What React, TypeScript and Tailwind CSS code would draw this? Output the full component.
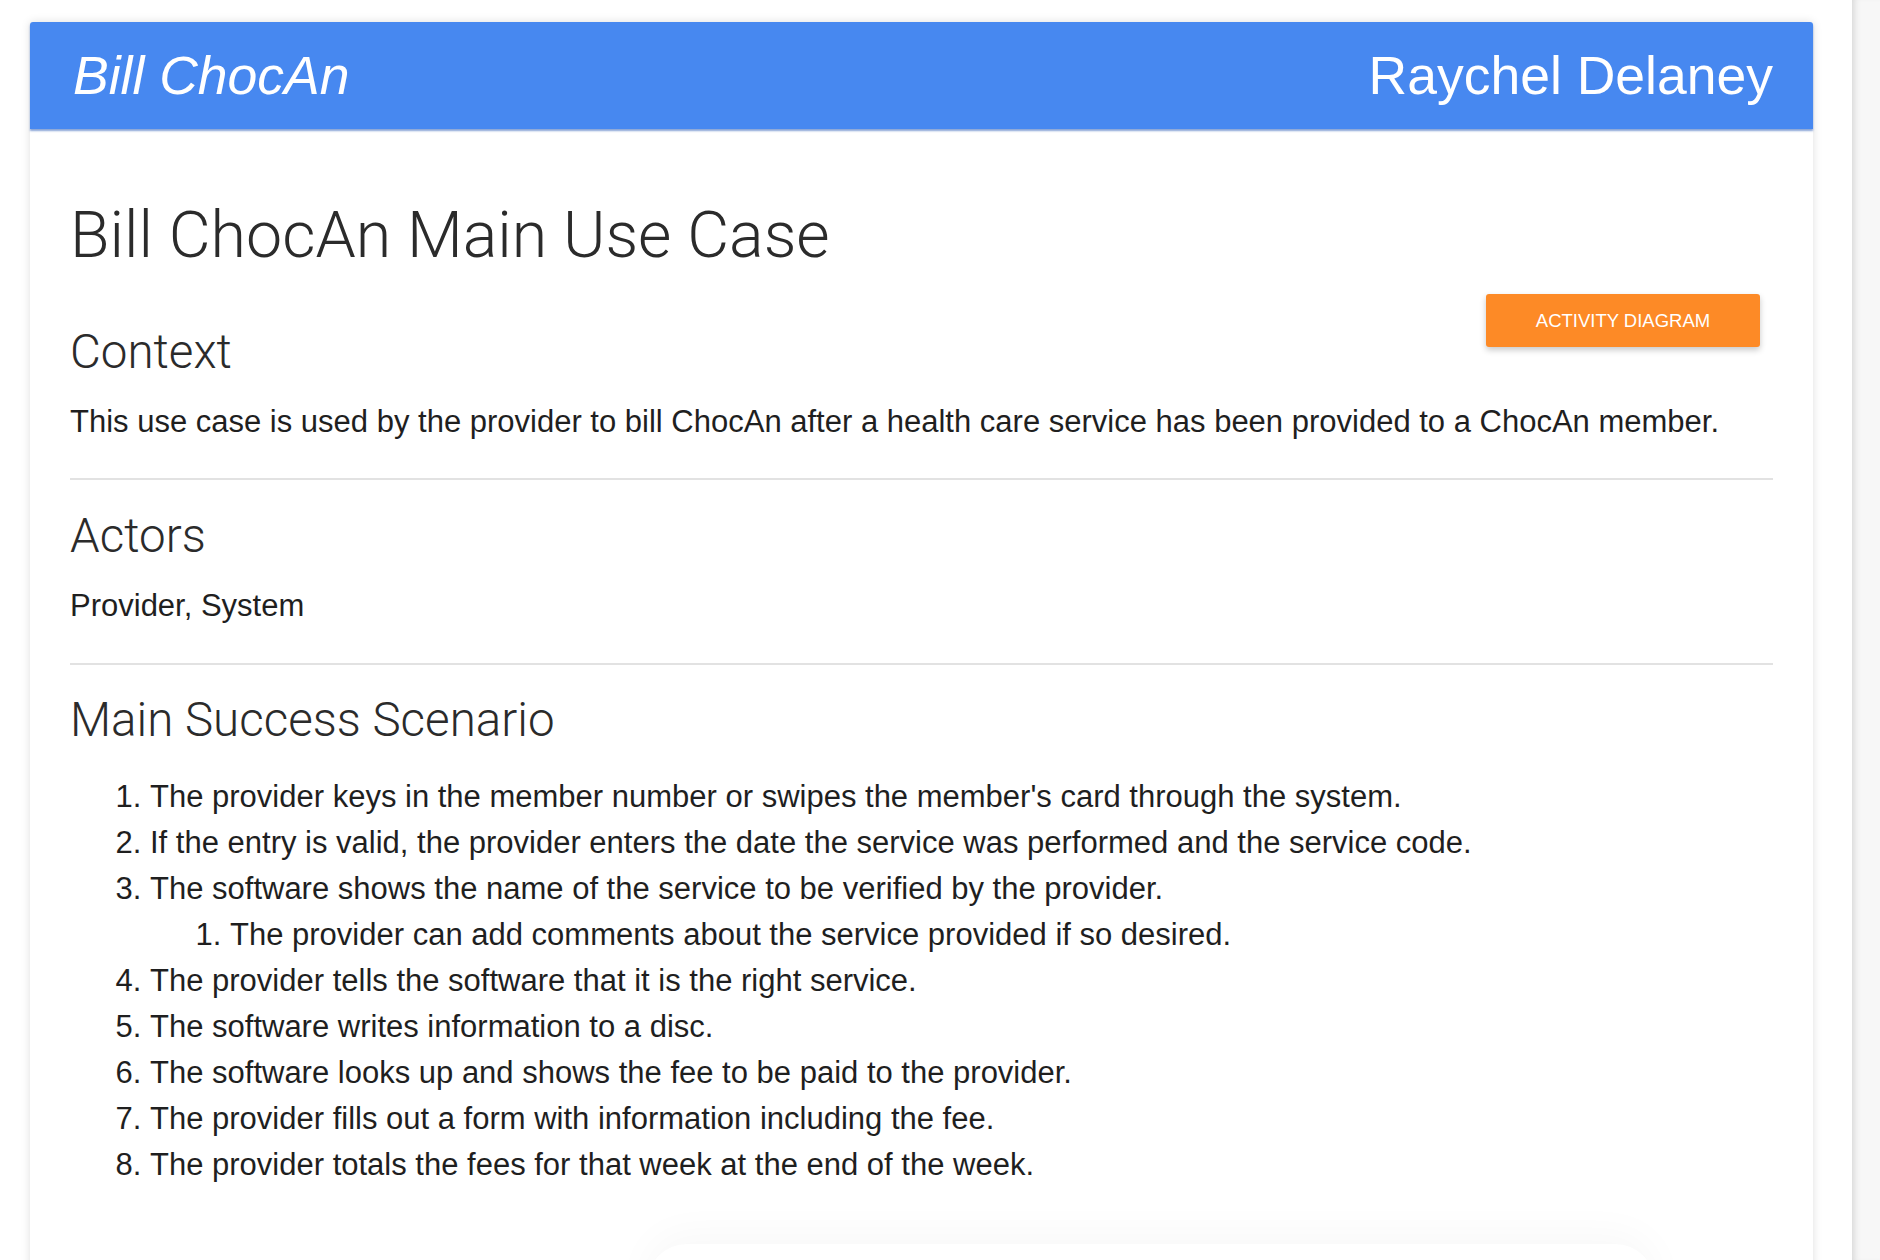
import React from "react";

const steps = [
  "The provider keys in the member number or swipes the member's card through the system.",
  "If the entry is valid, the provider enters the date the service was performed and the service code.",
  "The software shows the name of the service to be verified by the provider.",
  "The provider tells the software that it is the right service.",
  "The software writes information to a disc.",
  "The software looks up and shows the fee to be paid to the provider.",
  "The provider fills out a form with information including the fee.",
  "The provider totals the fees for that week at the end of the week.",
];

const heading = "font-['Roboto',sans-serif] font-light text-[#2b2b2b]";
const body = "font-['Liberation_Sans',Arial,sans-serif] text-[#1f1f1f]";

export default function App() {
  return (
    <div className="relative flex h-[1260px] w-full overflow-hidden bg-white">
      <div className="flex-1 pl-[30px] pt-[22px]">
        <div className="flex h-[1400px] w-[1783px] flex-col rounded-t-[3px] bg-white shadow-[0_0_10px_rgba(0,0,0,0.13)]">
          <header className="flex h-[107px] items-center justify-between rounded-t-[3px] bg-[#4788f0] pl-[43px] pr-[40px] shadow-[0_2px_2px_rgba(40,90,180,0.55)]">
            <span className="font-['Liberation_Sans',Arial,sans-serif] text-[53.5px] italic leading-none text-white">Bill ChocAn</span>
            <span className="font-['Liberation_Sans',Arial,sans-serif] text-[53.5px] leading-none text-white">Raychel Delaney</span>
          </header>
          <main className="px-[40px] pt-[72px]">
            <h1 className={`${heading} text-[64.5px] leading-[68px]`}>Bill ChocAn Main Use Case</h1>
            <div className="mt-[25px] flex items-start justify-between">
              <h2 className={`${heading} mt-[32px] text-[47.5px] leading-[52px]`}>Context</h2>
              <button className="mr-[13px] flex h-[53px] w-[274px] items-center justify-center rounded-[3px] bg-[#fd8a26] font-['Liberation_Sans',Arial,sans-serif] text-[18.5px] uppercase text-white shadow-[0_3px_6px_rgba(0,0,0,0.22)]">
                Activity Diagram
              </button>
            </div>
            <p className={`${body} mt-[24px] text-[31px] leading-[40px]`}>
              This use case is used by the provider to bill ChocAn after a health care service has been provided to a ChocAn member.
            </p>
            <hr className="mt-[36px] h-[2px] border-0 bg-[#e2e2e2]" />
            <h2 className={`${heading} mt-[30px] text-[47.5px] leading-[52px]`}>Actors</h2>
            <p className={`${body} mt-[24px] text-[31px] leading-[40px]`}>Provider, System</p>
            <hr className="mt-[37px] h-[2px] border-0 bg-[#e2e2e2]" />
            <h2 className={`${heading} mt-[29px] text-[47.5px] leading-[52px]`}>Main Success Scenario</h2>
            <ol className={`${body} mt-[28px] list-decimal pl-[80px] text-[31px] leading-[46px]`}>
              {steps.map((s, i) => (
                <li key={i}>
                  {s}
                  {i === 2 && (
                    <ol className="list-decimal pl-[80px]">
                      <li>The provider can add comments about the service provided if so desired.</li>
                    </ol>
                  )}
                </li>
              ))}
            </ol>
            <div className="ml-[577px] mt-[56px] h-[120px] w-[1008px] rounded-[40px] bg-white shadow-[0_-10px_40px_rgba(0,0,0,0.03)]" />
          </main>
        </div>
      </div>
      <div className="w-[28px] shrink-0 bg-[#f7f7f7] shadow-[inset_7px_0_7px_-5px_rgba(0,0,0,0.14)]" />
    </div>
  );
}
